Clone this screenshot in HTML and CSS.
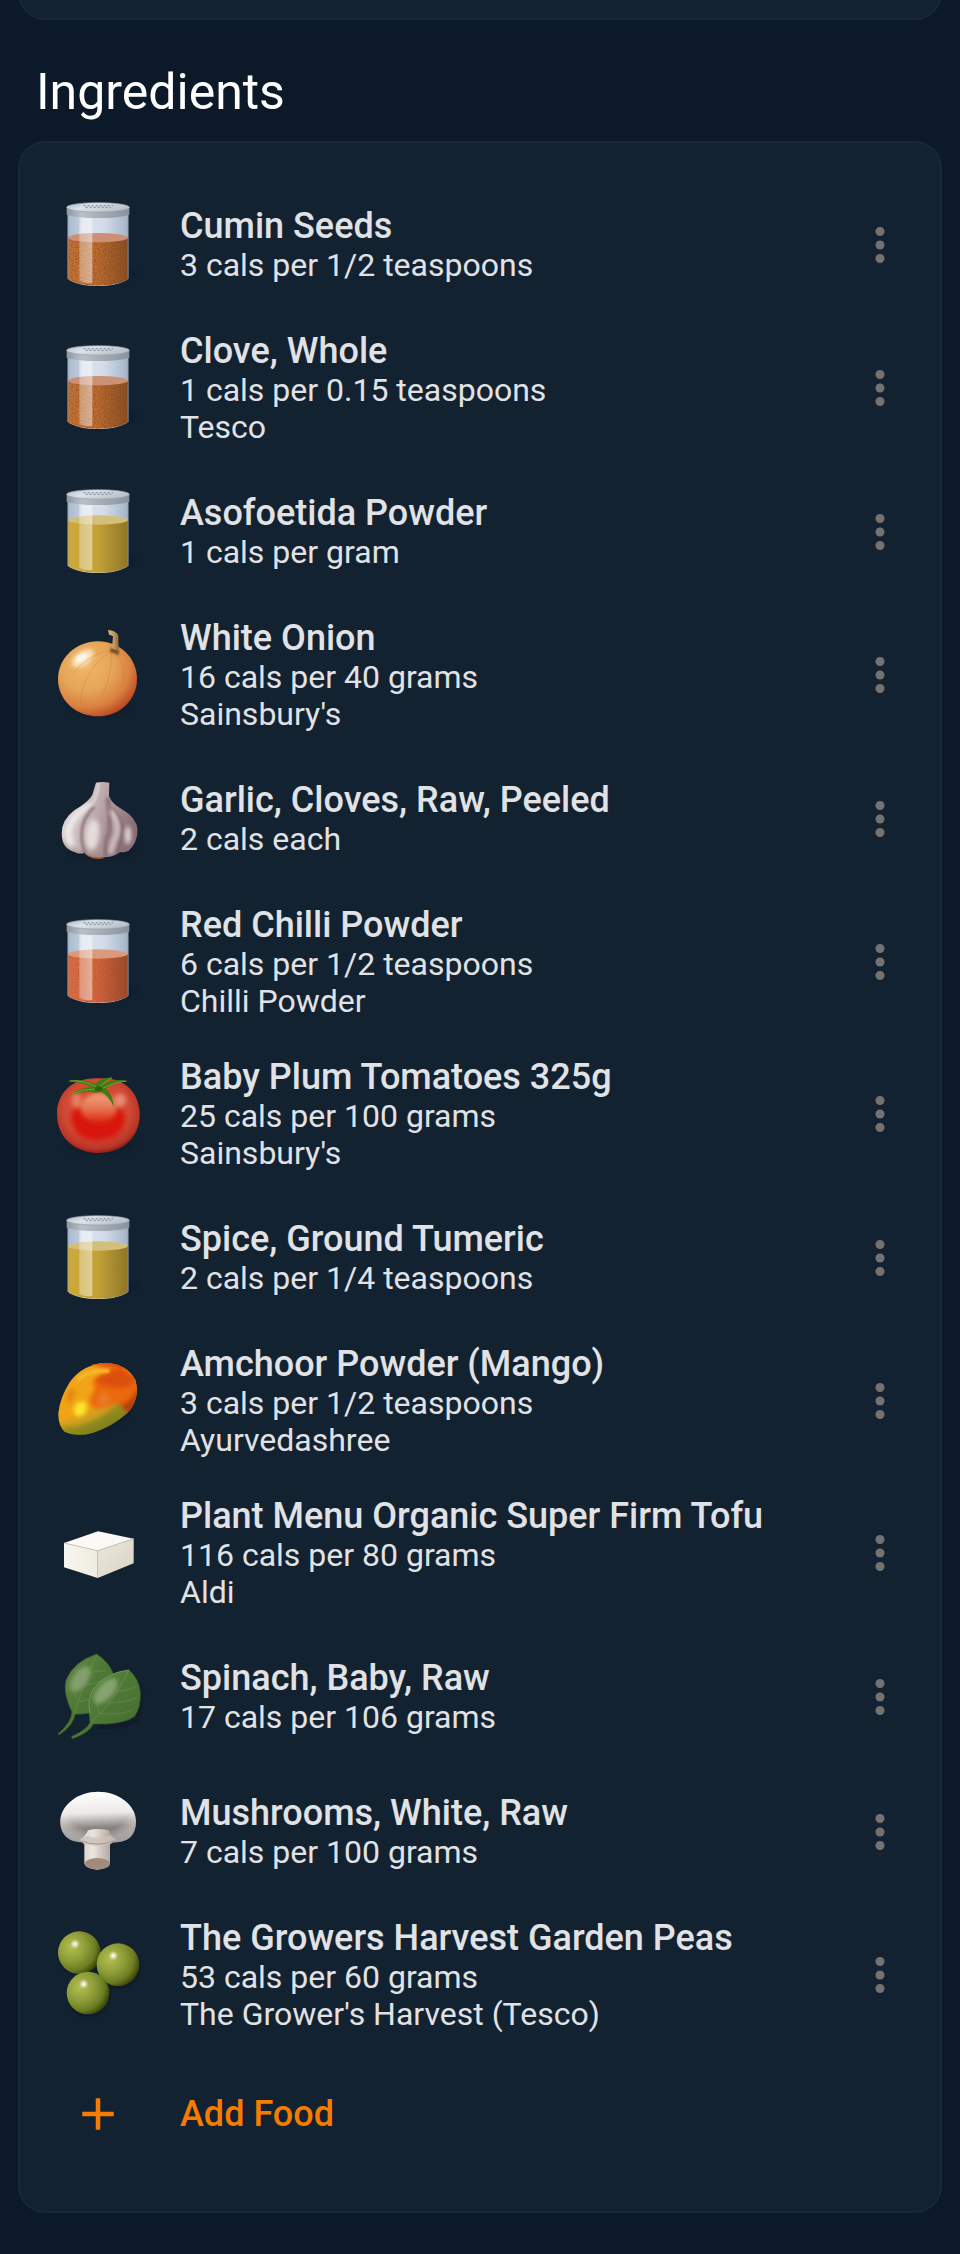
FILE: index.html
```html
<!DOCTYPE html>
<html lang="en">
<head>
<meta charset="utf-8">
<meta name="viewport" content="width=device-width, initial-scale=1">
<title>Ingredients</title>
<link rel="stylesheet" href="styles.css">
</head>
<body>
<svg class="defs" aria-hidden="true">
  <defs>
    <linearGradient id="lid" x1="0" x2="1"><stop offset="0" stop-color="#8f99a3"/><stop offset=".25" stop-color="#b9c0c8"/><stop offset=".6" stop-color="#a2a9b1"/><stop offset="1" stop-color="#89929b"/></linearGradient>
    <linearGradient id="lidtop" x1="0" x2="1" y2=".4"><stop offset="0" stop-color="#aeb9c5"/><stop offset=".4" stop-color="#dde3ea"/><stop offset="1" stop-color="#b8c2cc"/></linearGradient>
    <linearGradient id="glass" x1="0" x2="1"><stop offset="0" stop-color="#a9b9cb"/><stop offset=".18" stop-color="#bccadb"/><stop offset=".24" stop-color="#dbe2ec"/><stop offset=".6" stop-color="#d3dce8"/><stop offset=".8" stop-color="#bac8d9"/><stop offset="1" stop-color="#a3b2c5"/></linearGradient>
    <linearGradient id="shade" x1="0" x2="1"><stop offset="0" stop-color="#fff" stop-opacity=".02"/><stop offset=".5" stop-color="#000" stop-opacity=".04"/><stop offset="1" stop-color="#000" stop-opacity=".3"/></linearGradient>
    <linearGradient id="shine" x1="0" x2="1"><stop offset="0" stop-color="#fff" stop-opacity=".3"/><stop offset="1" stop-color="#fff" stop-opacity=".48"/></linearGradient>
    <radialGradient id="onion" cx=".36" cy=".32" r=".75"><stop offset="0" stop-color="#efb768"/><stop offset=".45" stop-color="#e6a557"/><stop offset=".75" stop-color="#d98040"/><stop offset="1" stop-color="#b5401f"/></radialGradient>
    <linearGradient id="stem" x1="0" x2="1"><stop offset="0" stop-color="#d9b277"/><stop offset=".5" stop-color="#c79d62"/><stop offset="1" stop-color="#8e6a3e"/></linearGradient>
    <linearGradient id="garlic" x1="0" x2="1" y2=".3"><stop offset="0" stop-color="#e9dfdc"/><stop offset=".4" stop-color="#cdbfc0"/><stop offset="1" stop-color="#8b6d74"/></linearGradient>
    <radialGradient id="tomato" cx=".48" cy=".42" r=".6"><stop offset="0" stop-color="#dd4a30"/><stop offset=".65" stop-color="#d04a34"/><stop offset=".88" stop-color="#b93427"/><stop offset="1" stop-color="#7d1814"/></radialGradient>
    <linearGradient id="tomglow" x1="0" y1="0" x2="0" y2="1"><stop offset="0" stop-color="#eea27c"/><stop offset=".45" stop-color="#e87b58"/><stop offset="1" stop-color="#d81f0c"/></linearGradient>
    <linearGradient id="mango" x1=".25" y1=".1" x2=".7" y2=".95"><stop offset="0" stop-color="#f3a31a"/><stop offset=".5" stop-color="#f0a415"/><stop offset=".68" stop-color="#c79d22"/><stop offset=".82" stop-color="#7d8022"/><stop offset="1" stop-color="#4c5a14"/></linearGradient>
    <linearGradient id="cap" x1=".48" y1="0" x2=".54" y2="1"><stop offset="0" stop-color="#fff"/><stop offset=".42" stop-color="#ece9e8"/><stop offset=".7" stop-color="#8c8683"/><stop offset="1" stop-color="#6d6865"/></linearGradient>
    <radialGradient id="capedge" cx=".5" cy=".4" r=".55"><stop offset=".7" stop-color="#fff" stop-opacity="0"/><stop offset="1" stop-color="#d9d6d4" stop-opacity=".5"/></radialGradient>
    <linearGradient id="stalk" x1="0" x2="1"><stop offset="0" stop-color="#d8cdc8"/><stop offset=".35" stop-color="#ece4df"/><stop offset="1" stop-color="#a2958f"/></linearGradient>
    <linearGradient id="leaf" x1="0" x2="1" y2="1"><stop offset="0" stop-color="#5f8a43"/><stop offset=".5" stop-color="#4f7836"/><stop offset="1" stop-color="#446a2d"/></linearGradient>
    <linearGradient id="tofuL" x1="0" x2="1"><stop offset="0" stop-color="#f7f5f0"/><stop offset="1" stop-color="#efecdf"/></linearGradient>
    <linearGradient id="tofuR" x1="0" x2="1" y2="1"><stop offset="0" stop-color="#eae7da"/><stop offset="1" stop-color="#d9d5c4"/></linearGradient>
    <radialGradient id="pea" cx=".32" cy=".36" r=".7"><stop offset="0" stop-color="#b3c050"/><stop offset=".5" stop-color="#8b9b38"/><stop offset=".8" stop-color="#6b7c22"/><stop offset="1" stop-color="#3c4a08"/></radialGradient>
    <radialGradient id="glint"><stop offset="0" stop-color="#fff"/><stop offset=".4" stop-color="#f0e8d8" stop-opacity=".85"/><stop offset="1" stop-color="#dcd9a0" stop-opacity="0"/></radialGradient>
    <filter id="b3" x="-50%" y="-50%" width="200%" height="200%"><feGaussianBlur stdDeviation="3"/></filter>
    <filter id="b7" x="-50%" y="-50%" width="200%" height="200%"><feGaussianBlur stdDeviation="7"/></filter>
    <filter id="grain" x="0" y="0" width="100%" height="100%"><feTurbulence type="fractalNoise" baseFrequency=".22" numOctaves="2" seed="4"/><feColorMatrix values="0 0 0 0 .2  0 0 0 0 .06  0 0 0 0 .02  2.4 0 0 0 -1"/><feComposite in2="SourceGraphic" operator="in"/></filter>
    <clipPath id="mangoclip"><path d="M55 222Q60 175 90 128Q130 74 200 71Q262 76 286 123Q302 178 262 222Q218 262 160 281Q110 295 75 279Q54 260 55 222Z"/></clipPath>
    <clipPath id="garlicclip"><path d="M168 68Q188 64 208 68L207 108Q214 130 246 148Q288 172 293 208Q292 250 266 272Q250 278 240 276Q222 292 186 292Q150 294 134 278Q118 284 104 276Q66 266 65 222Q64 180 104 150Q146 126 157 104Z"/></clipPath>

    <g id="jar-back">
      <path d="M120 310Q230 330 292 280L262 262Z" fill="#091522" opacity=".45" filter="url(#b3)"/>
      <path d="M83 92H265V296Q240 317 174 318Q108 317 83 296Z" fill="url(#glass)"/>
    </g>
    <g id="jar-front">
      <path d="M118 106Q137 111 157 112V308Q140 314 118 303Z" fill="url(#shine)"/>
      <path d="M84 104V296M264 104V296" stroke="#8798a9" stroke-width="2.5" opacity=".7"/>
      <path d="M80 81V104Q110 114 174 114Q238 114 268 104V81Z" fill="url(#lid)"/>
      <ellipse cx="174" cy="82" rx="94" ry="14" fill="url(#lidtop)" stroke="#97a2ae" stroke-width="2"/>
      <path d="M131 77H219M137 82H213" stroke="#8b96a2" stroke-width="4" stroke-dasharray="6 6"/>
    </g>
    <symbol id="jar-brown" viewBox="39 60 270 270">
      <use href="#jar-back"/>
      <path d="M84 173H264V296Q240 316 174 317Q108 316 84 296Z" fill="#c47030"/>
      <path d="M84 173H264V296Q240 316 174 317Q108 316 84 296Z" fill="url(#shade)"/>
      <path d="M84 173H264V296Q240 316 174 317Q108 316 84 296Z" filter="url(#grain)" opacity=".65"/>
      <ellipse cx="174" cy="173" rx="90" ry="14" fill="#cb9076"/>
      <use href="#jar-front"/>
    </symbol>
    <symbol id="jar-red" viewBox="39 60 270 270">
      <use href="#jar-back"/>
      <path d="M84 171H264V296Q240 316 174 317Q108 316 84 296Z" fill="#db683e"/>
      <path d="M84 171H264V296Q240 316 174 317Q108 316 84 296Z" fill="url(#shade)"/>
      <path d="M84 171H264V296Q240 316 174 317Q108 316 84 296Z" filter="url(#grain)" opacity=".3"/>
      <ellipse cx="174" cy="171" rx="90" ry="14" fill="#dc9a7c"/>
      <use href="#jar-front"/>
    </symbol>
    <symbol id="jar-yellow" viewBox="39 60 270 270">
      <use href="#jar-back"/>
      <path d="M84 159H264V296Q240 316 174 317Q108 316 84 296Z" fill="#cba738"/>
      <path d="M84 159H264V296Q240 316 174 317Q108 316 84 296Z" fill="url(#shade)"/>
      <ellipse cx="174" cy="159" rx="90" ry="14" fill="#d3bf7c"/>
      <use href="#jar-front"/>
    </symbol>
    <symbol id="more" viewBox="0 0 24 24"><circle cx="12" cy="6" r="2"/><circle cx="12" cy="12" r="2"/><circle cx="12" cy="18" r="2"/></symbol>
  </defs>
</svg>

<main class="page">
  <section class="card card-previous" aria-hidden="true"></section>
  <h1 class="heading">Ingredients</h1>
  <section class="card">
    <ul class="foods">
      <li class="food">
        <svg class="pic" aria-hidden="true"><use href="#jar-brown"/></svg>
        <div class="text"><h2 class="name">Cumin Seeds</h2><p class="info">3 cals per 1/2 teaspoons</p></div>
        <button class="more" type="button" aria-label="Options for Cumin Seeds"><svg aria-hidden="true"><use href="#more"/></svg></button>
      </li>
      <li class="food">
        <svg class="pic" aria-hidden="true"><use href="#jar-brown"/></svg>
        <div class="text"><h2 class="name">Clove, Whole</h2><p class="info">1 cals per 0.15 teaspoons</p><p class="info">Tesco</p></div>
        <button class="more" type="button" aria-label="Options for Clove, Whole"><svg aria-hidden="true"><use href="#more"/></svg></button>
      </li>
      <li class="food">
        <svg class="pic" aria-hidden="true"><use href="#jar-yellow"/></svg>
        <div class="text"><h2 class="name">Asofoetida Powder</h2><p class="info">1 cals per gram</p></div>
        <button class="more" type="button" aria-label="Options for Asofoetida Powder"><svg aria-hidden="true"><use href="#more"/></svg></button>
      </li>
      <li class="food">
        <svg class="pic" viewBox="39 481 270 270" aria-hidden="true">
          <ellipse cx="180" cy="706" rx="95" ry="32" fill="#091522" opacity=".4" filter="url(#b7)"/>
          <path d="M174 515C240 515 291 565 291 628C291 692 238 740 174 740C108 740 54 692 54 628C54 565 108 515 174 515Z" fill="url(#onion)"/>
          <ellipse cx="128" cy="566" rx="37" ry="21" transform="rotate(-35 128 566)" fill="#fff5df" opacity=".75" filter="url(#b7)"/>
          <ellipse cx="124" cy="564" rx="18" ry="10" transform="rotate(-30 124 564)" fill="#fff" opacity=".7" filter="url(#b3)"/>
          <g fill="none" stroke="#b9783a" stroke-width="2.5" opacity=".4"><path d="M216 545Q160 575 134 640Q122 670 121 700"/><path d="M214 546Q218 620 180 690"/><path d="M228 548Q266 600 244 660"/><path d="M205 542Q140 560 100 610"/></g>
          <path d="M210 538Q222 526 238 545L236 556Q222 552 210 546Z" fill="#5a3315" opacity=".75" filter="url(#b3)"/>
          <path d="M204 481Q226 482 235 496L236 540Q226 544 216 535L219 500Q212 496 207 495Z" fill="url(#stem)"/>
        </svg>
        <div class="text"><h2 class="name">White Onion</h2><p class="info">16 cals per 40 grams</p><p class="info">Sainsbury's</p></div>
        <button class="more" type="button" aria-label="Options for White Onion"><svg aria-hidden="true"><use href="#more"/></svg></button>
      </li>
      <li class="food">
        <svg class="pic" viewBox="39 42 270 270" aria-hidden="true">
          <ellipse cx="185" cy="274" rx="100" ry="14" fill="#091522" opacity=".5" filter="url(#b7)"/>
          <path d="M130 276Q150 304 196 294Z" fill="#a5501d"/>
          <g clip-path="url(#garlicclip)">
            <path d="M50 60H300V300H50Z" fill="url(#garlic)"/>
            <path d="M153 134Q98 162 85 212Q84 240 98 256" fill="none" stroke="#fff" stroke-width="22" opacity=".6" filter="url(#b7)"/>
            <path d="M163 140Q124 176 125 226Q126 258 138 286" fill="none" stroke="#86696f" stroke-width="10" opacity=".7" filter="url(#b3)"/>
            <ellipse cx="158" cy="224" rx="20" ry="46" transform="rotate(6 158 224)" fill="#f0eae6" opacity=".8" filter="url(#b7)"/>
            <path d="M203 112Q212 180 208 216Q194 250 196 290" fill="none" stroke="#866970" stroke-width="15" opacity=".65" filter="url(#b3)"/>
            <path d="M214 150Q240 190 230 225Q216 250 212 282" fill="none" stroke="#f0e8e5" stroke-width="16" opacity=".65" filter="url(#b7)"/>
            <path d="M216 142Q254 180 246 225Q242 254 230 280" fill="none" stroke="#735760" stroke-width="7" opacity=".55" filter="url(#b3)"/>
            <ellipse cx="264" cy="226" rx="9" ry="28" fill="#fff" opacity=".75" filter="url(#b7)"/>
            <path d="M65 240Q90 280 132 272Q160 292 200 286Q250 284 290 240L300 310H50Z" fill="#8d757b" opacity=".5" filter="url(#b7)"/>
            <path d="M174 66Q176 108 150 138" fill="none" stroke="#eee6e4" stroke-width="10" opacity=".55" filter="url(#b3)"/>
          </g>
        </svg>
        <div class="text"><h2 class="name">Garlic, Cloves, Raw, Peeled</h2><p class="info">2 cals each</p></div>
        <button class="more" type="button" aria-label="Options for Garlic, Cloves, Raw, Peeled"><svg aria-hidden="true"><use href="#more"/></svg></button>
      </li>
      <li class="food">
        <svg class="pic" aria-hidden="true"><use href="#jar-red"/></svg>
        <div class="text"><h2 class="name">Red Chilli Powder</h2><p class="info">6 cals per 1/2 teaspoons</p><p class="info">Chilli Powder</p></div>
        <button class="more" type="button" aria-label="Options for Red Chilli Powder"><svg aria-hidden="true"><use href="#more"/></svg></button>
      </li>
      <li class="food">
        <svg class="pic" viewBox="39 30 270 270" aria-hidden="true">
          <ellipse cx="180" cy="254" rx="98" ry="26" fill="#091522" opacity=".4" filter="url(#b7)"/>
          <path d="M176 58C252 52 299 100 299 166C299 240 245 282 176 282C105 282 51 236 51 164C51 100 100 54 176 58Z" fill="url(#tomato)"/>
          <path d="M94 172Q100 246 174 244Q250 242 255 174Q250 150 235 150H115Q98 150 94 172Z" fill="#d91707" filter="url(#b7)"/>
          <ellipse cx="176" cy="148" rx="54" ry="46" fill="url(#tomglow)" filter="url(#b7)"/>
          <ellipse cx="110" cy="124" rx="16" ry="22" fill="#ef9a7c" opacity=".65" filter="url(#b7)"/>
          <ellipse cx="240" cy="124" rx="18" ry="20" fill="#f0a78c" opacity=".7" filter="url(#b7)"/>
          <path d="M80 67Q126 56 166 75Q186 54 217 56Q200 66 186 78Q225 56 266 67Q224 68 198 88Q220 110 222 145Q206 108 182 98Q166 104 150 98Q124 98 91 108Q120 86 156 84Q120 68 80 67Z" fill="#3f7d12"/>
          <path d="M90 66Q132 63 170 84M96 105Q130 90 164 90M180 82Q200 64 216 56M188 88Q222 68 258 66" fill="none" stroke="#72a52f" stroke-width="3"/>
          <path d="M166 84Q178 78 190 88L184 97Q170 98 164 92Z" fill="#2c620b"/>
        </svg>
        <div class="text"><h2 class="name">Baby Plum Tomatoes 325g</h2><p class="info">25 cals per 100 grams</p><p class="info">Sainsbury's</p></div>
        <button class="more" type="button" aria-label="Options for Baby Plum Tomatoes 325g"><svg aria-hidden="true"><use href="#more"/></svg></button>
      </li>
      <li class="food">
        <svg class="pic" aria-hidden="true"><use href="#jar-yellow"/></svg>
        <div class="text"><h2 class="name">Spice, Ground Tumeric</h2><p class="info">2 cals per 1/4 teaspoons</p></div>
        <button class="more" type="button" aria-label="Options for Spice, Ground Tumeric"><svg aria-hidden="true"><use href="#more"/></svg></button>
      </li>
      <li class="food">
        <svg class="pic" viewBox="39 51 270 270" aria-hidden="true">
          <path d="M130 278Q220 272 270 220L252 205Z" fill="#091522" opacity=".6" filter="url(#b7)"/>
          <g clip-path="url(#mangoclip)">
            <path d="M40 60H310V300H40Z" fill="url(#mango)"/>
            <path d="M148 60Q240 60 300 100V200L262 224Q246 206 228 192Q190 212 160 206Q138 190 156 165Q172 150 156 130Q180 105 215 98Q170 90 148 60Z" fill="#ec680c" filter="url(#b7)"/>
            <path d="M165 122Q190 100 240 88L290 120Q270 150 235 145Q190 145 165 122Z" fill="#d94a08" opacity=".8" filter="url(#b7)"/>
            <path d="M240 200Q280 186 292 150L310 190L265 230Z" fill="#a8380c" opacity=".85" filter="url(#b7)"/>
            <path d="M150 74Q200 64 250 84" stroke="#cf3f12" stroke-width="9" fill="none" filter="url(#b3)"/>
            <path d="M112 122Q150 92 208 96" stroke="#f6b928" stroke-width="12" fill="none" filter="url(#b3)"/>
            <ellipse cx="92" cy="170" rx="9" ry="23" transform="rotate(20 92 170)" fill="#e4820e" filter="url(#b7)"/>
            <ellipse cx="192" cy="180" rx="18" ry="22" fill="#ea7a22" filter="url(#b7)"/>
            <ellipse cx="121" cy="210" rx="18" ry="24" transform="rotate(25 121 210)" fill="#fbe52f" filter="url(#b7)"/>
            <path d="M54 262Q110 270 170 244Q214 216 234 192L266 225Q190 300 90 300Z" fill="#84861f" opacity=".7" filter="url(#b7)"/>
          </g>
        </svg>
        <div class="text"><h2 class="name">Amchoor Powder (Mango)</h2><p class="info">3 cals per 1/2 teaspoons</p><p class="info">Ayurvedashree</p></div>
        <button class="more" type="button" aria-label="Options for Amchoor Powder (Mango)"><svg aria-hidden="true"><use href="#more"/></svg></button>
      </li>
      <li class="food">
        <svg class="pic" viewBox="39 507 270 270" aria-hidden="true">
          <path d="M72 612L174 577L281 599L173 635Z" fill="#faf9f6"/>
          <path d="M72 612L173 635V717L72 685Z" fill="url(#tofuL)"/>
          <path d="M173 635L281 599V673L173 717Z" fill="url(#tofuR)"/>
          <path d="M72 612L173 635L281 599M173 635V717" fill="none" stroke="#c9c5c0" stroke-width="2.5"/>
        </svg>
        <div class="text"><h2 class="name">Plant Menu Organic Super Firm Tofu</h2><p class="info">116 cals per 80 grams</p><p class="info">Aldi</p></div>
        <button class="more" type="button" aria-label="Options for Plant Menu Organic Super Firm Tofu"><svg aria-hidden="true"><use href="#more"/></svg></button>
      </li>
      <li class="food">
        <svg class="pic" viewBox="39 37 270 270" aria-hidden="true">
          <path d="M170 260Q260 264 290 238Q308 200 300 130" fill="none" stroke="#091522" stroke-width="8" opacity=".6" filter="url(#b3)"/>
          <path d="M54 282Q92 252 96 217Q68 160 78 122Q100 66 170 43Q206 66 220 102Q228 160 190 205Q156 224 106 224Q98 260 57 286Z" fill="url(#leaf)" stroke="#36571f" stroke-width="2"/>
          <ellipse cx="121" cy="118" rx="22" ry="44" transform="rotate(34 121 118)" fill="#94ac80" opacity=".75" filter="url(#b7)"/>
          <path d="M104 220Q130 130 169 50M116 184Q100 160 96 150M118 186Q160 180 185 160M146 100Q180 92 196 94M130 136Q160 134 180 124" fill="none" stroke="#84a465" stroke-width="2" opacity=".5"/>
          <path d="M94 291Q142 270 150 248Q140 186 160 148Q196 100 267 91Q296 116 301 156Q304 200 284 230Q250 256 160 253Q150 278 98 297Z" fill="url(#leaf)" stroke="#385a20" stroke-width="2"/>
          <path d="M149 220Q142 180 160 148Q196 100 267 91" fill="none" stroke="#79985e" stroke-width="3"/>
          <ellipse cx="197" cy="154" rx="23" ry="47" transform="rotate(42 197 154)" fill="#94ac80" opacity=".8" filter="url(#b7)"/>
          <path d="M154 248Q220 190 265 94M180 222Q240 228 280 210M206 190Q250 190 294 174M228 156Q260 156 290 140M180 222Q172 200 170 190" fill="none" stroke="#8aa96a" stroke-width="2" opacity=".5"/>
        </svg>
        <div class="text"><h2 class="name">Spinach, Baby, Raw</h2><p class="info">17 cals per 106 grams</p></div>
        <button class="more" type="button" aria-label="Options for Spinach, Baby, Raw"><svg aria-hidden="true"><use href="#more"/></svg></button>
      </li>
      <li class="food">
        <svg class="pic" viewBox="39 442 270 270" aria-hidden="true">
          <path d="M174 456C235 456 288 496 288 545C288 590 262 610 218 608H130C86 608 60 584 61 543C64 494 115 456 174 456Z" fill="url(#cap)"/>
          <path d="M174 456C235 456 288 496 288 545C288 590 262 610 218 608H130C86 608 60 584 61 543C64 494 115 456 174 456Z" fill="url(#capedge)"/>
          <path d="M144 572Q174 564 206 572Q212 590 228 599Q218 610 210 614V672Q200 688 172 690Q144 688 133 672V614Q126 608 121 600Q136 590 144 572Z" fill="url(#stalk)"/>
          <path d="M121 600Q134 590 142 590Q174 598 212 588L228 599Q222 608 210 614Q174 622 133 614Z" fill="#cdc0ba" opacity=".8"/>
          <path d="M126 605Q174 622 222 604" fill="none" stroke="#a8978f" stroke-width="3"/>
          <ellipse cx="172" cy="672" rx="38" ry="17" fill="#a18b7c"/>
        </svg>
        <div class="text"><h2 class="name">Mushrooms, White, Raw</h2><p class="info">7 cals per 100 grams</p></div>
        <button class="more" type="button" aria-label="Options for Mushrooms, White, Raw"><svg aria-hidden="true"><use href="#more"/></svg></button>
      </li>
      <li class="food">
        <svg class="pic" viewBox="39 93 270 270" aria-hidden="true">
          <g fill="#091522" opacity=".6" filter="url(#b3)"><circle cx="120" cy="167" r="63"/><circle cx="236" cy="204" r="63"/><circle cx="146" cy="289" r="63"/></g>
          <circle cx="118" cy="161" r="64" fill="url(#pea)"/><circle cx="105" cy="135" r="15" fill="url(#glint)"/>
          <circle cx="234" cy="197" r="64" fill="url(#pea)"/><circle cx="220" cy="170" r="15" fill="url(#glint)"/>
          <circle cx="144" cy="282" r="64" fill="url(#pea)"/><circle cx="131" cy="255" r="15" fill="url(#glint)"/>
        </svg>
        <div class="text"><h2 class="name">The Growers Harvest Garden Peas</h2><p class="info">53 cals per 60 grams</p><p class="info">The Grower's Harvest (Tesco)</p></div>
        <button class="more" type="button" aria-label="Options for The Growers Harvest Garden Peas"><svg aria-hidden="true"><use href="#more"/></svg></button>
      </li>
    </ul>
    <button class="add" type="button">
      <span class="add-icon"><svg viewBox="0 0 24 24" aria-hidden="true"><path d="M19 13h-6v6h-2v-6H5v-2h6V5h2v6h6v2z"/></svg></span>
      <span>Add Food</span>
    </button>
  </section>
</main>
</body>
</html>
```
FILE: styles.css
```css
* { box-sizing: border-box; }

body {
  margin: 0;
  background: #0c1928;
  color: #e1e2e5;
  font-family: Roboto, "Liberation Sans", sans-serif;
}

.defs {
  position: absolute;
  width: 0;
  height: 0;
}

.page {
  padding: 0 18px 41px;
  overflow: hidden;
}

.card {
  padding: 34px 33px;
  background: #132231;
  border: 2px solid #182838;
  border-radius: 27px;
}

.card-previous {
  height: 60px;
  margin-top: -40px;
  padding: 0;
}

.heading {
  margin: 43px 18px 20px;
  color: #fff;
  font-size: 50px;
  font-weight: 400;
  line-height: 58px;
}

.foods {
  margin: 0;
  padding: 0;
  list-style: none;
}

.food {
  display: flex;
  align-items: center;
  gap: 37px;
  min-height: 135px;
  padding: 18px 0;
}

.pic {
  flex: none;
  width: 90px;
  height: 90px;
  margin: -10px 0;
  overflow: visible;
}

.text {
  flex: 1;
  min-width: 0;
}

.name {
  margin: 0;
  font-size: 36px;
  font-weight: 500;
  line-height: 42px;
}

.info {
  margin: 0;
  font-size: 32px;
  line-height: 37px;
}

.more {
  flex: none;
  width: 54px;
  height: 54px;
  padding: 0;
  border: 0;
  background: none;
  fill: #757371;
  cursor: pointer;
}

.more svg {
  display: block;
  width: 100%;
  height: 100%;
}

.add {
  display: flex;
  align-items: center;
  gap: 37px;
  width: 100%;
  height: 126px;
  padding: 0;
  border: 0;
  background: none;
  color: #f57c00;
  font: inherit;
  font-size: 36px;
  font-weight: 500;
  line-height: 42px;
  text-align: left;
  cursor: pointer;
}

.add-icon {
  display: flex;
  justify-content: center;
  width: 90px;
}

.add-icon svg {
  width: 54px;
  height: 54px;
  fill: currentColor;
}
```
